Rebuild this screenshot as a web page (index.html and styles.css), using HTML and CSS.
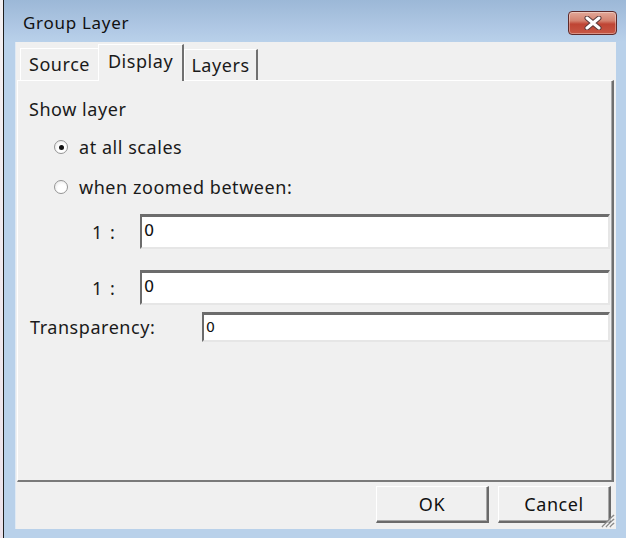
FILE: index.html
```html
<!DOCTYPE html>
<html>
<head>
<meta charset="utf-8">
<link rel="stylesheet" href="styles.css">
</head>
<body>
<div class="desk"></div>
<div class="window">
  <div class="titlebar">
    <span class="title">Group Layer</span>
    <button class="close" aria-label="Close">
      <svg width="20" height="14" viewBox="0 0 20 14">
        <path d="M4 2 L16 12 M16 2 L4 12" stroke="#5a3a3a" stroke-width="5" stroke-linecap="round"/>
        <path d="M4 2 L16 12 M16 2 L4 12" stroke="#ffffff" stroke-width="3" stroke-linecap="round"/>
      </svg>
    </button>
  </div>
  <div class="client">
    <div class="tabs">
      <div class="tab">Source</div>
      <div class="tab active">Display</div>
      <div class="tab last">Layers</div>
    </div>
    <div class="panel">
      <div class="heading">Show layer</div>
      <div class="radio-row first"><span class="radio checked"></span><span>at all scales</span></div>
      <div class="radio-row"><span class="radio"></span><span>when zoomed between:</span></div>
      <div class="scale-row first"><span class="scale-label">1 :</span><div class="field">0</div></div>
      <div class="scale-row second"><span class="scale-label">1 :</span><div class="field">0</div></div>
      <div class="trans-row"><span class="trans-label">Transparency:</span><div class="field small">0</div></div>
    </div>
    <div class="buttons">
      <button class="btn">OK</button>
      <button class="btn">Cancel</button>
    </div>
    <svg class="grip" width="16" height="16" viewBox="0 0 16 16">
      <path d="M15 3 L3 15 M15 7 L7 15 M15 11 L11 15" stroke="#8c8c8c" stroke-width="1.6"/>
      <path d="M15 4.5 L4.5 15 M15 8.5 L8.5 15 M15 12.5 L12.5 15" stroke="#ffffff" stroke-width="1"/>
    </svg>
  </div>
</div>
</body>
</html>
```
FILE: styles.css
```css
* { box-sizing: border-box; }
html, body { margin: 0; padding: 0; }
body {
  width: 626px;
  height: 538px;
  overflow: hidden;
  display: flex;
  background: #efeaee;
  font-family: "Noto Sans", "Open Sans", sans-serif;
  font-size: 18px;
  letter-spacing: 0.55px;
  color: #1a1a1a;
}
.desk { width: 3px; background: linear-gradient(#f4f0f2, #ece2ea); }
.window {
  flex: 1;
  border-left: 1px solid #1e1e1e;
  background: linear-gradient(#9cb8d7 0px, #b1c9e5 30px, #b9d1ea 42px, #b9d1ea 100%);
  display: flex;
  flex-direction: column;
}
.titlebar {
  height: 42px;
  display: flex;
  justify-content: space-between;
  align-items: flex-start;
  padding: 0 9px 0 19px;
}
.title { margin-top: 11px; font-size: 17px; color: #111; letter-spacing: 0.7px; }
.close {
  margin-top: 11px;
  width: 49px;
  height: 24px;
  border: 1px solid #5e2a2a;
  border-radius: 4px;
  background: linear-gradient(#e2a898 0%, #d4826f 40%, #bf4534 55%, #c75744 100%);
  box-shadow: inset 0 0 0 1px rgba(255,255,255,0.35);
  padding: 0;
  display: flex;
  align-items: center;
  justify-content: center;
}
.client {
  position: relative;
  margin: 0 10px 9px 12px;
  height: 487px;
  background: #f0f0f0;
  box-shadow: -1px 0 0 #dfe9f4;
  padding: 2px 2px 0 1px;
  display: flex;
  flex-direction: column;
}
.tabs {
  height: 36px;
  display: flex;
  align-items: flex-end;
  padding-left: 3px;
  position: relative;
  z-index: 2;
}
.tab {
  height: 32px;
  padding: 0;
  border-top: 1px solid #ffffff;
  border-left: 1px solid #ffffff;
  width: 78px;
  text-align: center;
  line-height: 30px;
  background: #f0f0f0;
}
.tab.active {
  height: 37px;
  width: 86px;
  margin-bottom: -1px;
  line-height: 32px;
  border-right: 2px solid #707070;
}
.tab.last {
  width: 74px;
  height: 31px;
  border-right: 2px solid #707070;
}
.panel {
  height: 402px;
  border-top: 1px solid #ffffff;
  border-left: 1px solid #ffffff;
  border-right: 2px solid #6f6f6f;
  border-bottom: 2px solid #7a7a7a;
  box-shadow: inset -1px 0 0 #a9a9a9;
  padding: 17px 2px 0 11px;
}
.heading { line-height: 22px; }
.radio-row {
  display: flex;
  align-items: center;
  height: 24px;
  padding-left: 25px;
  margin-top: 16px;
}
.radio-row.first { margin-top: 15px; }
.radio {
  width: 14px;
  height: 14px;
  border-radius: 50%;
  border: 1px solid #959595;
  background: radial-gradient(circle at 60% 65%, #ffffff 40%, #e0e0e0 100%);
  margin-right: 11px;
  display: flex;
  align-items: center;
  justify-content: center;
}
.radio.checked::after {
  content: "";
  width: 5px;
  height: 5px;
  border-radius: 50%;
  background: #111;
}
.scale-row {
  display: flex;
  align-items: center;
  height: 35px;
  padding-left: 63px;
}
.scale-row.first { margin-top: 15px; }
.scale-row.second { margin-top: 21px; }
.scale-label { width: 48px; letter-spacing: 1.5px; }
.field {
  flex: 1;
  height: 100%;
  background: #ffffff;
  border-top: 3px solid #6c6c6c;
  border-left: 2px solid #6c6c6c;
  border-right: 2px solid #e6e6e6;
  border-bottom: 2px solid #e6e6e6;
  font-family: "DejaVu Sans", sans-serif;
  font-size: 16px;
  letter-spacing: 0;
  line-height: 28px;
  padding-left: 2px;
  color: #111;
}
.trans-row {
  display: flex;
  align-items: center;
  height: 30px;
  margin-top: 7px;
}
.trans-label { width: 173px; padding-left: 1px; }
.field.small { font-size: 14px; line-height: 25px; }
.buttons {
  flex: 1;
  display: flex;
  justify-content: flex-end;
  align-items: flex-start;
  gap: 9px;
  padding: 4px 3px 0 0;
}
.btn {
  width: 113px;
  height: 37px;
  background: #f0f0f0;
  border-top: 1px solid #ffffff;
  border-left: 1px solid #ffffff;
  border-right: 2px solid #6a6a6a;
  border-bottom: 2px solid #6a6a6a;
  box-shadow: inset -1px -1px 0 #a8a8a8;
  font-family: "Noto Sans", "Open Sans", sans-serif;
  font-size: 18px;
  letter-spacing: 0.55px;
  color: #111;
  padding: 0;
}
.grip { position: absolute; right: 1px; bottom: 1px; }
```
